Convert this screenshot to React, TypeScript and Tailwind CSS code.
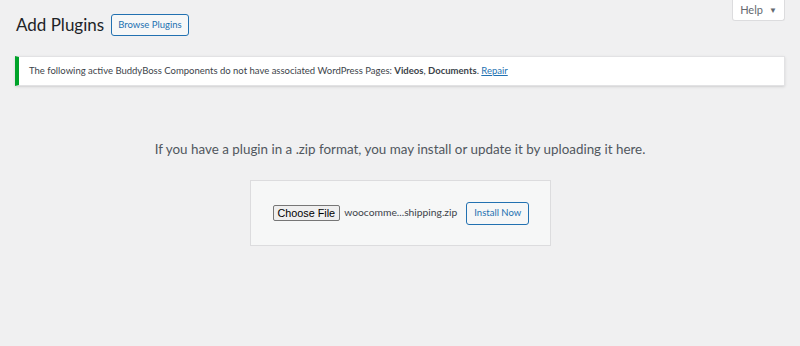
import React from 'react';

const wpFont = { fontFamily: 'Lato, "Open Sans", sans-serif' };

const App: React.FC = () => {
  return (
    <div className="w-[800px] h-[346px] bg-[#f0f0f1] text-[#3c434a] overflow-hidden" style={wpFont}>
      {/* Help tab */}
      <div className="flex justify-end pr-[15px]">
        <button className="h-[21px] w-[53px] bg-white border border-t-0 border-[#dcdcde] text-[11px] text-[#646970] flex items-center justify-center gap-[6px] rounded-b-[3px] whitespace-nowrap">
          Help <span className="text-[8px]">▼</span>
        </button>
      </div>

      <div className="px-[15px]">
        {/* Header */}
        <div className="flex items-center gap-[7px] -mt-[10px] pl-[1px]">
          <h1 className="text-[17px] leading-[28px] text-[#1d2327]">Add Plugins</h1>
          <button className="h-[22px] px-[6px] border border-[#2271b1] rounded-[3px] bg-[#f6f7f7] text-[9.5px] text-[#2271b1] whitespace-nowrap">
            Browse Plugins
          </button>
        </div>

        {/* Notice */}
        <div className="mt-[17px] h-[30px] bg-white border border-[#e2e2e4] border-l-[4px] border-l-[#00a32a] shadow-sm flex items-center pl-[10px] text-[9.5px] text-[#3c434a] whitespace-nowrap">
          <span>
            The following active BuddyBoss Components do not have associated WordPress Pages: <b className="font-bold">Videos</b>, <b className="font-bold">Documents</b>.{' '}
            <a className="text-[#2271b1] underline">Repair</a>
          </span>
        </div>

        {/* Upload */}
        <p className="mt-[53px] text-center text-[13.4px] text-[#50575e]">
          If you have a plugin in a .zip format, you may install or update it by uploading it here.
        </p>

        <div className="mx-auto mt-[21px] w-[301px] h-[66px] bg-[#f6f7f7] border border-[#dcdcde] flex items-center pl-[22px] whitespace-nowrap">
          <button
            className="shrink-0 h-[16px] px-[4px] border border-[#767676] rounded-[2px] bg-[#efefef] text-[10.8px] leading-[14px] text-black"
            style={{ fontFamily: '"Liberation Sans", Arial, sans-serif' }}
          >
            Choose File
          </button>
          <span className="ml-[4px] text-[10.3px] text-[#3c434a]">woocomme...shipping.zip</span>
          <button className="shrink-0 ml-[9px] h-[23px] px-[7px] border border-[#2271b1] rounded-[3px] bg-[#f6f7f7] text-[9.5px] text-[#2271b1]">
            Install Now
          </button>
        </div>
      </div>
    </div>
  );
};

export default App;
